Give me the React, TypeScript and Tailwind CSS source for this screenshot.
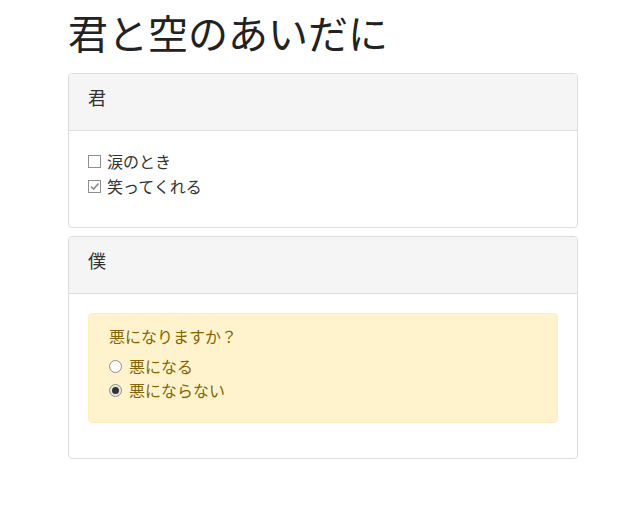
import React from "react";

const font = { fontFamily: '"Noto Sans CJK JP", "Noto Sans", sans-serif' };

function Check({ checked }: { checked?: boolean }) {
  return (
    <span className="inline-flex w-[13px] h-[13px] border border-[#8f8f8f] bg-white mr-[6px] items-center justify-center shrink-0">
      {checked && (
        <svg width="11" height="11" viewBox="0 0 11 11">
          <path d="M2 5.5 L4.5 8 L9.5 2.5" fill="none" stroke="#8a8a8a" strokeWidth="1.6" />
        </svg>
      )}
    </span>
  );
}

function Radio({ checked }: { checked?: boolean }) {
  return (
    <span
      className={
        "inline-flex w-[13px] h-[13px] rounded-full border border-[#8f8f8f] mr-[7px] items-center justify-center shrink-0 " +
        (checked ? "bg-[#e6e6e6]" : "bg-white")
      }
    >
      {checked && <span className="w-[7px] h-[7px] rounded-full bg-[#333333]" />}
    </span>
  );
}

export default function App() {
  return (
    <div className="bg-white min-h-[519px] text-[#333333]" style={font}>
      <div className="ml-[68px] w-[510px]">
        <h1 className="text-[40px] leading-[50px] pt-[7px] mb-[16px] font-normal text-[#222222]">
          君と空のあいだに
        </h1>

        <div className="border border-[#dddddd] rounded-[4px]">
          <div className="bg-[#f5f5f5] border-b border-[#dddddd] h-[57px] px-[19px] pt-[10px] text-[18px] leading-[26px] rounded-t-[4px]">
            君
          </div>
          <div className="px-[19px] pt-[18px] pb-[28px] text-[16px] leading-[25px]">
            <div className="flex items-center">
              <Check />
              <span>涙のとき</span>
            </div>
            <div className="flex items-center">
              <Check checked />
              <span>笑ってくれる</span>
            </div>
          </div>
        </div>

        <div className="border border-[#dddddd] rounded-[4px] mt-[8px]">
          <div className="bg-[#f5f5f5] border-b border-[#dddddd] h-[57px] px-[19px] pt-[10px] text-[18px] leading-[26px] rounded-t-[4px]">
            僕
          </div>
          <div className="px-[19px] pt-[19px] pb-[35px]">
            <div className="bg-[#fff3cd] border border-[#ffeeba] rounded-[4px] text-[#856404] px-[20px] pt-[10px] pb-[20px] text-[16px] leading-[24px]">
              <div>悪になりますか？</div>
              <div className="mt-[6px]">
                <div className="flex items-center">
                  <Radio />
                  <span>悪になる</span>
                </div>
                <div className="flex items-center">
                  <Radio checked />
                  <span>悪にならない</span>
                </div>
              </div>
            </div>
          </div>
        </div>
      </div>
    </div>
  );
}
